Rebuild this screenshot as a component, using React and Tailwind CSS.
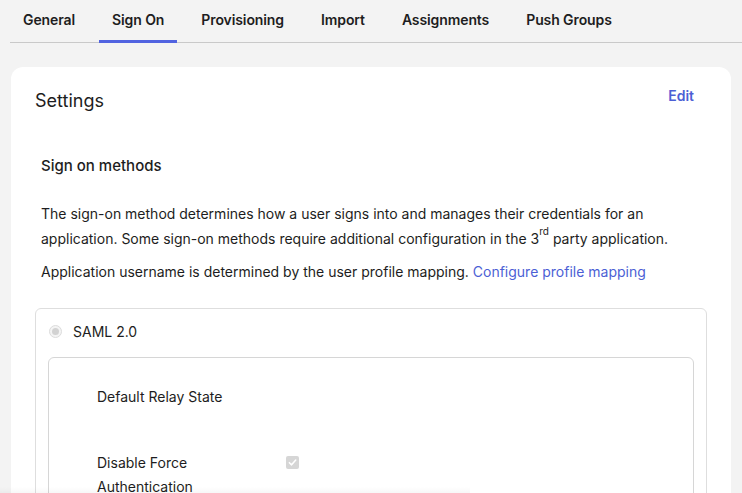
import React from "react";

const tabs = ["General", "Sign On", "Provisioning", "Import", "Assignments", "Push Groups"];

export default function App() {
  return (
    <div
      className="relative w-[742px] h-[493px] overflow-hidden bg-[#f3f3f3] text-[#1d1d21]"
      style={{ fontFamily: "Inter, 'Noto Sans', sans-serif" }}
    >
      <nav className="ml-[10px] flex gap-[11px] border-b border-[#c9c9c9] h-[43px]">
        {tabs.map((t) => (
          <div
            key={t}
            className={
              "px-[13px] h-[43px] flex items-center pb-[4px] text-[14px] font-semibold tracking-[-0.1px] " +
              (t === "Sign On" ? "border-b-[3px] border-[#5163e0] pt-[3px] pb-[4px] -mb-px" : "")
            }
          >
            {t}
          </div>
        ))}
      </nav>

      <div className="mx-[11px] mt-[24px] bg-white rounded-[12px] pt-[20px] pl-[24px] pr-[24px] pb-[40px]">
        <div className="flex justify-between">
          <h2 className="text-[18px] leading-[24px] mt-[2px]">Settings</h2>
          <a className="text-[14px] leading-[20px] font-semibold text-[#4c5fd5] mr-[13px] -mt-px">Edit</a>
        </div>

        <div className="pl-[6px]">
          <h3 className="mt-[43px] text-[15px] leading-[20px] font-medium">Sign on methods</h3>
          <p className="mt-[25px] text-[14px] leading-[25px]">
            The sign-on method determines how a user signs into and manages their credentials for an application. Some
            sign-on methods require additional configuration in the 3
            <sup className="text-[10px] leading-none align-[4px]">rd</sup> party application.
          </p>
          <p className="mt-[8px] text-[14px] leading-[25px]">
            Application username is determined by the user profile mapping.{" "}
            <a className="text-[#4c5fd5]">Configure profile mapping</a>
          </p>
        </div>

        <div className="mt-[24px] border border-[#dedede] rounded-[6px] pl-[12px] pr-[12px] pt-[13px] pb-[40px]">
          <div className="flex items-center gap-[11px] h-[18px]">
            <span className="ml-[1px] w-[13px] h-[13px] rounded-full border border-[#dcdcdc] bg-[#f4f4f4] flex items-center justify-center">
              <span className="w-[7px] h-[7px] rounded-full bg-[#d2d2d2]" />
            </span>
            <span className="text-[14px]">SAML 2.0</span>
          </div>

          <div className="mt-[17px] border border-[#d6d6d6] rounded-[6px] pl-[48px] pt-[29px] pb-[40px] h-[200px]">
            <div className="text-[14px] leading-[20px]">Default Relay State</div>
            <div className="mt-[44px] flex">
              <div className="w-[189px] text-[14px] leading-[24px]">
                Disable Force
                <br />
                Authentication
              </div>
              <span className="mt-[5px] w-[13px] h-[13px] rounded-[2px] bg-[#d6d6d6] flex items-center justify-center">
                <svg width="9" height="9" viewBox="0 0 10 10">
                  <path d="M1.5 5.2 L4 7.6 L8.6 2.2" stroke="#fff" strokeWidth="1.7" fill="none" strokeLinecap="round" strokeLinejoin="round" />
                </svg>
              </span>
            </div>
          </div>
        </div>
      </div>

      <div className="absolute left-0 bottom-0 w-[470px] h-[6px] bg-gradient-to-b from-transparent to-[#00000008]" />
    </div>
  );
}
